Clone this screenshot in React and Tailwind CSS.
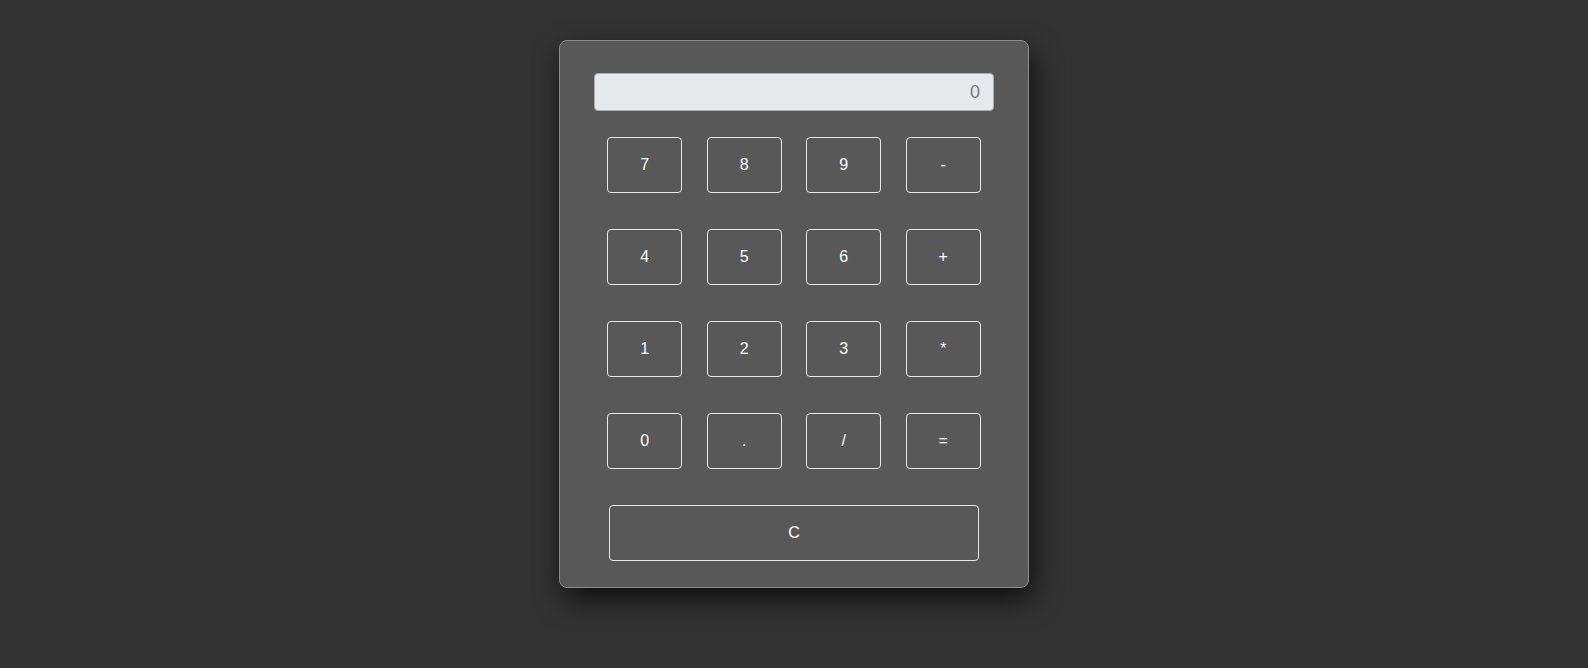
import React, { useState } from 'react'

// Calculadora simples — display + teclado 4x4 + botão C
const teclas = ['7', '8', '9', '-', '4', '5', '6', '+', '1', '2', '3', '*', '0', '.', '/', '=']

export default function App() {
  const [valor, setValor] = useState('0')

  const aperta = (t) => {
    if (t === '=') {
      try {
        // eslint-disable-next-line no-new-func
        setValor(String(Function(`return (${valor})`)()))
      } catch (e) {
        setValor('Erro')
      }
      return
    }
    setValor((v) => (v === '0' || v === 'Erro' ? t : v + t))
  }

  return (
    <div className="min-h-screen bg-[#333333] pt-10 font-['Liberation_Sans',Arial,sans-serif]">
      <div className="mx-auto w-[470px] rounded-lg border border-[#8c8c8c] bg-[#585858] px-[34px] pt-[32px] pb-[26px] shadow-[4px_12px_28px_rgba(0,0,0,0.7)]">
        {/* Display */}
        <input
          readOnly
          value={valor}
          className="block h-[38px] w-full rounded-[4px] border border-[#a9adb1] bg-[#e6e9ec] px-[13px] text-right text-[18px] text-[#7a7a7a] outline-none"
        />

        {/* Teclado */}
        <div className="mt-[26px] grid grid-cols-[repeat(4,75px)] justify-center gap-x-[24.5px] gap-y-[36px]">
          {teclas.map((t) => (
            <button
              key={t}
              onClick={() => aperta(t)}
              className="h-[56px] rounded-[4px] border border-[#e8e8e8] bg-transparent text-[16px] text-white"
            >
              {t}
            </button>
          ))}
        </div>

        <button
          onClick={() => setValor('0')}
          className="mx-auto mt-[36px] block h-[56px] w-[370px] rounded-[4px] border border-[#e8e8e8] bg-transparent text-[16px] text-white"
        >
          C
        </button>
      </div>
    </div>
  )
}
